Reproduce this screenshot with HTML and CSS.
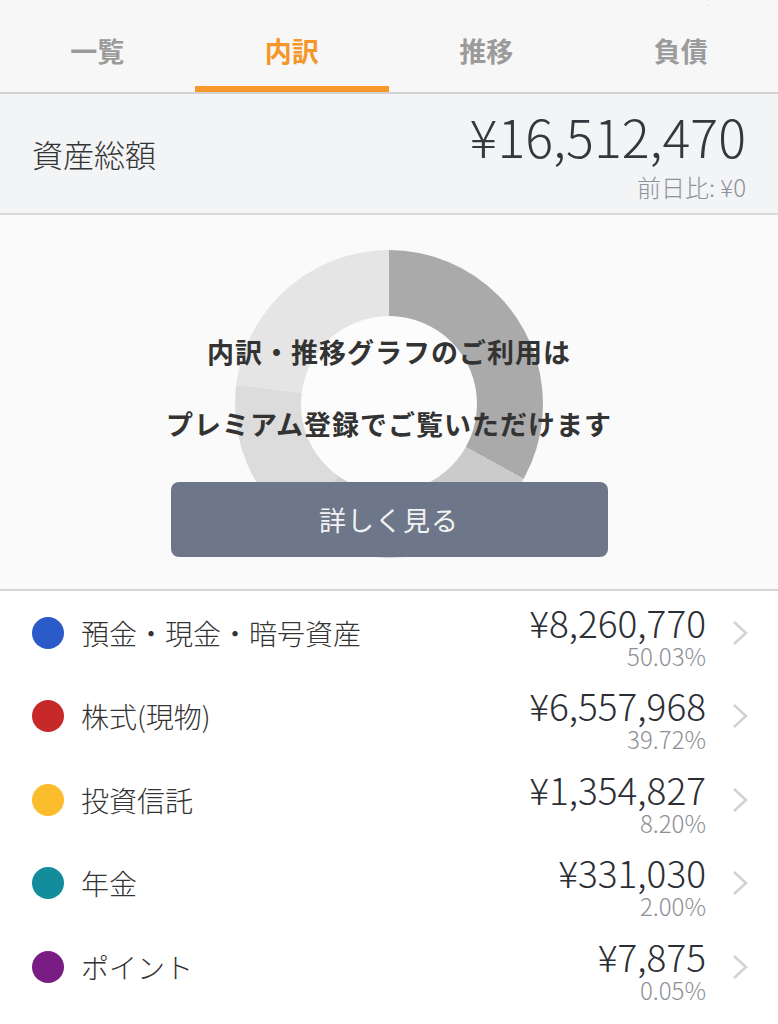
FILE: index.html
```html
<!DOCTYPE html>
<html lang="ja">
  <head>
    <meta charset="UTF-8" />
    <meta name="viewport" content="width=device-width, initial-scale=1.0" />
    <title>内訳</title>
    <link rel="stylesheet" href="styles.css">
  </head>
  <body>
    <div class="header">
      <div class="sync"><span>更新</span></div>
      <div class="tabs">
        <div class="tab">一覧</div>
        <div class="tab active">内訳</div>
        <div class="tab">推移</div>
        <div class="tab">負債</div>
      </div>
    </div>

    <div class="summary">
      <div class="summary-label">資産総額</div>
      <div class="summary-values">
        <div class="total">¥16,512,470</div>
        <div class="diff">前日比: ¥0</div>
      </div>
    </div>

    <div class="chart">
      <div class="donut"><div class="donut-hole"></div></div>
      <div class="premium">
        <p>内訳・推移グラフのご利用は</p>
        <p>プレミアム登録でご覧いただけます</p>
        <button class="more-button">詳しく見る</button>
      </div>
    </div>

    <div class="asset-list">
      <div class="asset">
        <span class="dot" style="background: #2a5bc8"></span>
        <span class="asset-name">預金・現金・暗号資産</span>
        <div class="asset-values">
          <div class="amount">¥8,260,770</div>
          <div class="ratio">50.03%</div>
        </div>
        <svg class="chevron" width="16" height="26" viewBox="0 0 16 26"><polyline points="2,2 14,13 2,24" /></svg>
      </div>
      <div class="asset">
        <span class="dot" style="background: #c7292b"></span>
        <span class="asset-name">株式(現物)</span>
        <div class="asset-values">
          <div class="amount">¥6,557,968</div>
          <div class="ratio">39.72%</div>
        </div>
        <svg class="chevron" width="16" height="26" viewBox="0 0 16 26"><polyline points="2,2 14,13 2,24" /></svg>
      </div>
      <div class="asset">
        <span class="dot" style="background: #fbbd2c"></span>
        <span class="asset-name">投資信託</span>
        <div class="asset-values">
          <div class="amount">¥1,354,827</div>
          <div class="ratio">8.20%</div>
        </div>
        <svg class="chevron" width="16" height="26" viewBox="0 0 16 26"><polyline points="2,2 14,13 2,24" /></svg>
      </div>
      <div class="asset">
        <span class="dot" style="background: #138d9b"></span>
        <span class="asset-name">年金</span>
        <div class="asset-values">
          <div class="amount">¥331,030</div>
          <div class="ratio">2.00%</div>
        </div>
        <svg class="chevron" width="16" height="26" viewBox="0 0 16 26"><polyline points="2,2 14,13 2,24" /></svg>
      </div>
      <div class="asset">
        <span class="dot" style="background: #791d84"></span>
        <span class="asset-name">ポイント</span>
        <div class="asset-values">
          <div class="amount">¥7,875</div>
          <div class="ratio">0.05%</div>
        </div>
        <svg class="chevron" width="16" height="26" viewBox="0 0 16 26"><polyline points="2,2 14,13 2,24" /></svg>
      </div>
    </div>
  </body>
</html>
```

FILE: styles.css
```css
body {
  margin: 0;
  background: #fff;
  font-family: "Noto Sans CJK JP", "Noto Sans", sans-serif;
  color: #333;
}
.header {
  background: #f7f7f7;
  border-bottom: 2px solid #d2d2d2;
}
.sync {
  height: 6px;
  overflow: hidden;
  text-align: right;
  padding-right: 56px;
  font-size: 20px;
  color: #888;
}
.sync span {
  display: inline-block;
  line-height: 20px;
  margin-top: -16px;
}
.tabs {
  display: flex;
}
.tab {
  flex: 1;
  height: 86px;
  box-sizing: border-box;
  padding-top: 9px;
  border-bottom: 6px solid transparent;
  display: flex;
  align-items: center;
  justify-content: center;
  font-size: 27px;
  font-weight: bold;
  color: #9b9b9b;
}
.tab.active {
  color: #f5962a;
  border-bottom-color: #f7982b;
}
.summary {
  height: 119px;
  background: #f3f4f6;
  border-bottom: 2px solid #d8d8d8;
  display: flex;
  justify-content: space-between;
  align-items: center;
  padding: 0 32px;
}
.summary-label {
  font-size: 31px;
  font-weight: 300;
  color: #333;
}
.summary-values {
  align-self: stretch;
  padding-top: 13px;
  text-align: right;
}
.total {
  font-size: 52px;
  line-height: 58px;
  font-weight: 300;
  color: #33373e;
}
.diff {
  margin-top: 7px;
  font-size: 24px;
  line-height: 30px;
  font-weight: 300;
  color: #8e9299;
}
.chart {
  position: relative;
  height: 376px;
  box-sizing: border-box;
  padding-top: 35px;
  background: #fafafa;
  border-bottom: 2px solid #d5d5d5;
}
.donut {
  width: 308px;
  height: 308px;
  margin: 0 auto;
  border-radius: 50%;
  background: conic-gradient(
    #aaaaaa 0deg 119deg,
    #cbcbcb 119deg 165deg,
    #d0d0d0 165deg 215deg,
    #dcdcdc 215deg 277deg,
    #e5e5e5 277deg 360deg
  );
  display: flex;
  align-items: center;
  justify-content: center;
}
.donut-hole {
  width: 176px;
  height: 176px;
  border-radius: 50%;
  background: #fcfcfc;
}
.premium {
  position: absolute;
  inset: 0;
  padding-top: 101px;
  display: flex;
  flex-direction: column;
  align-items: center;
}
.premium p {
  margin: 0;
  font-size: 27px;
  line-height: 72px;
  font-weight: bold;
  letter-spacing: 1px;
  color: #333;
}
.more-button {
  margin-top: 22px;
  width: 437px;
  height: 75px;
  border: none;
  border-radius: 8px;
  background: #6e7689;
  color: #f2f2f2;
  font-family: inherit;
  font-size: 27px;
  letter-spacing: 1px;
}
.asset {
  height: 83.5px;
  display: flex;
  align-items: center;
  padding: 0 30px 0 32px;
}
.dot {
  width: 32px;
  height: 32px;
  border-radius: 50%;
  flex-shrink: 0;
}
.asset-name {
  margin-left: 17px;
  flex: 1;
  font-size: 28px;
  font-weight: 300;
}
.asset-values {
  padding-top: 7px;
  text-align: right;
}
.amount {
  font-size: 37px;
  line-height: 38px;
  font-weight: 300;
  color: #2b2e34;
}
.ratio {
  margin-top: 1px;
  font-size: 24px;
  line-height: 28px;
  font-weight: 300;
  color: #8c9097;
}
.chevron {
  margin-left: 26px;
  fill: none;
  stroke: #d2d2d2;
  stroke-width: 2.5;
}
```
